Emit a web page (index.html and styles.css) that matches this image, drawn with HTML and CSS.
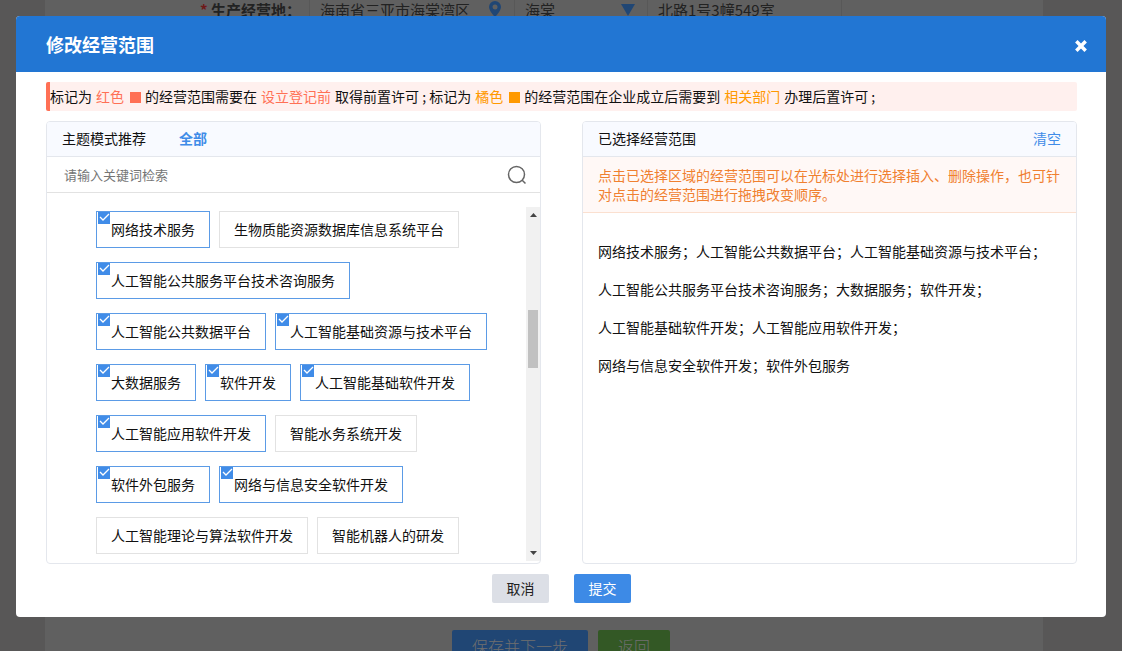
FILE: index.html
```html
<!DOCTYPE html>
<html lang="zh-CN">
<head>
<meta charset="UTF-8">
<meta name="viewport" content="width=device-width, initial-scale=1.0">
<title>修改经营范围</title>
<link rel="stylesheet" href="styles.css">
</head>
<body>

<div class="page">
    <div class="page-row">
        <span class="page-label"><i>*</i> 生产经营地：</span>
        <span class="page-field field-area">海南省三亚市海棠湾区
            <svg class="pin" viewBox="0 0 14 18"><path d="M7 1a6 6 0 0 0-6 6c0 4 6 10 6 10s6-6 6-10a6 6 0 0 0-6-6zm0 3.500a2.500 2.500 0 1 1 0 5 2.500 2.500 0 0 1 0-5z"/></svg>
        </span>
        <span class="page-field field-street">海棠
            <svg class="arrow" viewBox="0 0 14 12"><path d="M0 0h14L7 12z"/></svg>
        </span>
        <span class="page-field field-address">北路1号3幢549室</span>
    </div>
    <div class="page-actions">
        <button type="button" class="page-btn save">保存并下一步</button>
        <button type="button" class="page-btn back">返回</button>
    </div>
</div>

<div class="overlay">
    <div class="modal" role="dialog" aria-labelledby="modalTitle">
        <div class="modal-header">
            <h1 id="modalTitle">修改经营范围</h1>
            <button type="button" class="close" aria-label="关闭">
                <svg viewBox="0 0 12 12"><path d="M2 2l8 8M10 2l-8 8"/></svg>
            </button>
        </div>
        <div class="modal-body">
            <p class="notice">标记为<span class="red">红色</span><span class="square square-red"></span>的经营范围需要在<span class="red">设立登记前</span>取得前置许可 ; 标记为<span class="orange">橘色</span><span class="square square-orange"></span>的经营范围在企业成立后需要到<span class="orange">相关部门</span>办理后置许可 ;</p>

            <div class="panels">
                <div class="panel">
                    <div class="panel-header">
                        <span>主题模式推荐</span>
                        <a href="#" class="all">全部</a>
                    </div>
                    <form class="search">
                        <input type="text" placeholder="请输入关键词检索" aria-label="关键词">
                        <button type="button" aria-label="搜索">
                            <svg viewBox="0 0 20 20"><circle cx="9.500" cy="9.500" r="8"/><path d="M15 15l3.500 3.500"/></svg>
                        </button>
                    </form>
                    <div class="list">
                        <div class="tags">
                            <label class="tag"><input type="checkbox" checked>网络技术服务</label>
                            <label class="tag"><input type="checkbox">生物质能资源数据库信息系统平台</label>
                            <label class="tag"><input type="checkbox" checked>人工智能公共服务平台技术咨询服务</label>
                            <label class="tag"><input type="checkbox" checked>人工智能公共数据平台</label>
                            <label class="tag"><input type="checkbox" checked>人工智能基础资源与技术平台</label>
                            <label class="tag"><input type="checkbox" checked>大数据服务</label>
                            <label class="tag"><input type="checkbox" checked>软件开发</label>
                            <label class="tag"><input type="checkbox" checked>人工智能基础软件开发</label>
                            <label class="tag"><input type="checkbox" checked>人工智能应用软件开发</label>
                            <label class="tag"><input type="checkbox">智能水务系统开发</label>
                            <label class="tag"><input type="checkbox" checked>软件外包服务</label>
                            <label class="tag"><input type="checkbox" checked>网络与信息安全软件开发</label>
                            <label class="tag"><input type="checkbox">人工智能理论与算法软件开发</label>
                            <label class="tag"><input type="checkbox">智能机器人的研发</label>
                        </div>
                        <div class="scrollbar">
                            <svg viewBox="0 0 7 4"><path d="M0 4L3.500 0 7 4z"/></svg>
                            <div class="track"><div class="thumb"></div></div>
                            <svg viewBox="0 0 7 4"><path d="M0 0h7L3.500 4z"/></svg>
                        </div>
                    </div>
                </div>

                <div class="panel">
                    <div class="panel-header">
                        <span>已选择经营范围</span>
                        <button type="button" class="clear">清空</button>
                    </div>
                    <p class="tip">点击已选择区域的经营范围可以在光标处进行选择插入、删除操作，也可针对点击的经营范围进行拖拽改变顺序。</p>
                    <div class="selected">
                        <span>网络技术服务；</span><span>人工智能公共数据平台；</span><span>人工智能基础资源与技术平台；</span><span>人工智能公共服务平台技术咨询服务；</span><span>大数据服务；</span><span>软件开发；</span><br>
                        <span>人工智能基础软件开发；</span><span>人工智能应用软件开发；</span><br>
                        <span>网络与信息安全软件开发；</span><span>软件外包服务</span>
                    </div>
                </div>
            </div>

            <div class="modal-footer">
                <button type="button" class="btn cancel">取消</button>
                <button type="button" class="btn submit">提交</button>
            </div>
        </div>
    </div>
</div>

</body>
</html>
```
FILE: styles.css
```css
* {
    box-sizing: border-box;
}
body {
    margin: 0;
    background: #b0aeaf;
    color: #111;
    font-family: "Noto Sans CJK SC", sans-serif;
    font-size: 14px;
    font-weight: 400;
    overflow: hidden;
}
h1, p {
    margin: 0;
}
button, input {
    font: inherit;
}
button {
    padding: 0;
    border: none;
    background: none;
    cursor: pointer;
}
a {
    text-decoration: none;
}

/* page behind the dialog */
.page {
    display: flex;
    flex-direction: column;
    justify-content: space-between;
    height: 100vh;
    margin: 0 79px 0 45px;
    background: #c0c0c0;
    color: #444;
    font-size: 15px;
}
.page-row {
    display: flex;
    height: 20px;
    line-height: 20px;
    white-space: nowrap;
}
.page-label {
    width: 248px;
    margin-right: 16px;
    padding-left: 155px;
    font-weight: 700;
}
.page-label i {
    color: #d33;
    font-style: normal;
}
.page-field {
    display: flex;
    justify-content: space-between;
    padding: 0 10px;
    border-left: 1px solid #b0b0b0;
}
.field-area {
    width: 205px;
}
.field-street {
    width: 133px;
}
.field-address {
    width: 195px;
    border-right: 1px solid #b0b0b0;
}
.pin {
    width: 14px;
    height: 18px;
    margin-right: 2px;
    fill: #408ce8;
}
.arrow {
    width: 14px;
    height: 12px;
    margin: 4px 2px 0 0;
    fill: #408ce8;
}
.page-actions {
    display: flex;
    justify-content: center;
    gap: 10px;
    height: 21px;
    margin-left: 34px;
}
.page-btn {
    height: 32px;
    padding: 0 20px;
    border-radius: 2px;
    color: #ddd;
    font-size: 16px;
    font-weight: 300;
}
.save {
    background: #408ce8;
}
.back {
    background: #67b04b;
}

/* dialog */
.overlay {
    position: fixed;
    inset: 0;
    padding: 16px;
    background: rgba(0, 0, 0, 0.5);
}
.modal {
    border-radius: 4px;
    background: #fff;
    overflow: hidden;
}
.modal-header {
    display: flex;
    align-items: center;
    justify-content: space-between;
    height: 56px;
    padding: 0 18px 0 30px;
    background: #2276d3;
    color: #fff;
}
.modal-header h1 {
    font-size: 18px;
    font-weight: 700;
}
.close {
    display: flex;
    padding-top: 4px;
}
.close svg {
    width: 14px;
    height: 14px;
    fill: none;
    stroke: #fff;
    stroke-width: 3;
}
.modal-body {
    padding: 10px 29px 14px 30px;
}
.notice {
    height: 29px;
    line-height: 29px;
    border-left: 4px solid #ff7055;
    border-radius: 2px;
    background: #fff0ee;
    white-space: nowrap;
}
.notice span {
    margin: 0 4px;
}
.notice .square {
    display: inline-block;
    width: 11px;
    height: 11px;
    margin: 0 4px 0 2px;
    vertical-align: -1px;
}
.red {
    color: #ff7055;
}
.orange {
    color: #ff9900;
}
.square-red {
    background: #ff7055;
}
.square-orange {
    background: #ff9900;
}
.panels {
    display: grid;
    grid-template-columns: 1fr 1fr;
    gap: 41px;
    margin-top: 10px;
}
.panel {
    border: 1px solid #e4e7ed;
    border-radius: 4px;
    overflow: hidden;
}
.panel-header {
    display: flex;
    align-items: center;
    height: 35px;
    padding: 0 15px 2px;
    border-bottom: 1px solid #e4e7ed;
    background: #f8faff;
}
.all {
    margin-left: 33px;
    color: #408ce8;
    font-weight: 700;
}
.clear {
    margin-left: auto;
    color: #408ce8;
}
.search {
    display: flex;
    align-items: center;
    height: 36px;
    padding: 0 13px 0 17px;
    border-bottom: 1px solid #e2e2e2;
}
.search input {
    flex: 1;
    padding: 0;
    border: none;
    outline: none;
    background: none;
    font-size: 13px;
}
.search input::placeholder {
    color: #757575;
}
.search button {
    display: flex;
}
.search svg {
    width: 20px;
    height: 20px;
    fill: none;
    stroke: #666;
    stroke-width: 1.5;
}
.list {
    display: flex;
}
.tags {
    flex: 1;
    display: flex;
    flex-wrap: wrap;
    gap: 14px 9px;
    padding: 18px 0 9px 49px;
}
.tag {
    position: relative;
    height: 37px;
    padding: 0 14px;
    border: 1px solid #e2e2e2;
    line-height: 35px;
    white-space: nowrap;
    cursor: pointer;
}
.tag:has(input:checked) {
    border-color: #5b9be6;
}
.tag input {
    appearance: none;
    position: absolute;
    top: 0;
    left: 1px;
    width: 12px;
    height: 12px;
    margin: 0;
}
.tag input:checked {
    background: #408ce8 url("data:image/svg+xml,%3Csvg xmlns='http://www.w3.org/2000/svg' viewBox='0 0 12 12'%3E%3Cpath d='M2 5l3 3 6-6' fill='none' stroke='white' stroke-width='1.3'/%3E%3C/svg%3E");
}
.scrollbar {
    display: flex;
    flex-direction: column;
    align-items: center;
    width: 14px;
    margin: 14px 0 2px;
    padding: 6px 0;
    background: #f1f1f1;
}
.scrollbar svg {
    width: 7px;
    height: 4px;
    fill: #444;
}
.track {
    flex: 1;
    width: 10px;
    padding-top: 93px;
}
.thumb {
    height: 58px;
    background: #c1c1c1;
}
.tip {
    padding: 9px 15px 8px;
    border-bottom: 1px solid #fbe0d0;
    background: #fff8f6;
    color: #f08030;
    line-height: 19px;
}
.selected {
    padding: 19px 15px;
    line-height: 38px;
}
.selected span {
    display: inline-block;
}
.modal-footer {
    display: flex;
    justify-content: center;
    gap: 25px;
    margin-top: 10px;
}
.btn {
    width: 57px;
    height: 29px;
    padding-bottom: 2px;
    border-radius: 2px;
}
.cancel {
    background: #dcdfe6;
    color: #222;
}
.submit {
    background: #3d8ae6;
    color: #fff;
}
```
